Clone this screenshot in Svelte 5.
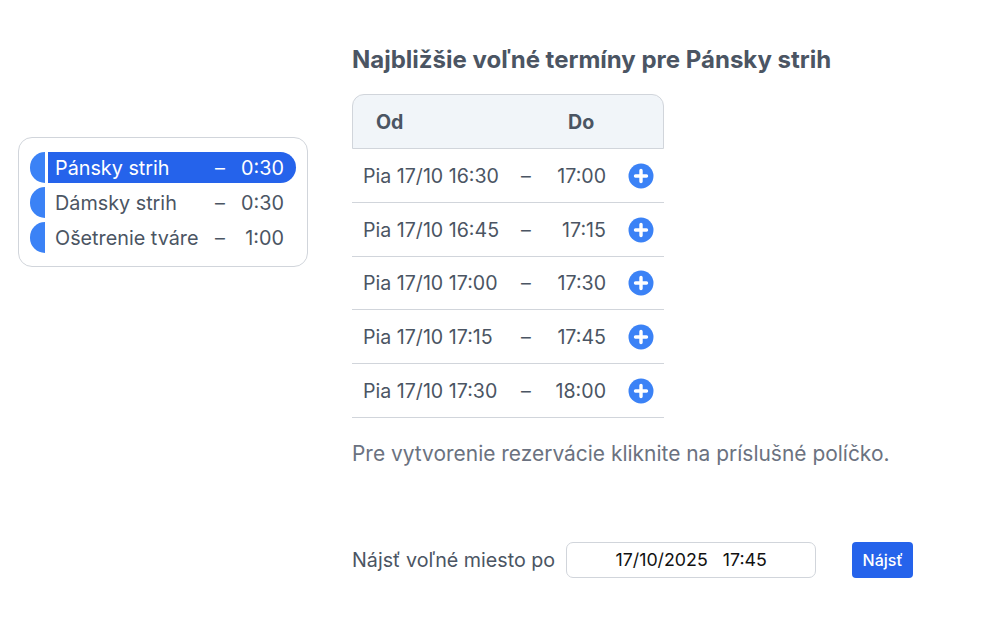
<script>
  const services = [
    { name: 'Pánsky strih', time: '0:30', active: true },
    { name: 'Dámsky strih', time: '0:30', active: false },
    { name: 'Ošetrenie tváre', time: '1:00', active: false }
  ];

  const slots = [
    { from: 'Pia 17/10 16:30', to: '17:00' },
    { from: 'Pia 17/10 16:45', to: '17:15' },
    { from: 'Pia 17/10 17:00', to: '17:30' },
    { from: 'Pia 17/10 17:15', to: '17:45' },
    { from: 'Pia 17/10 17:30', to: '18:00' }
  ];
</script>

<div class="page">
  <div class="services">
    {#each services as s}
      <div class="service">
        <span class="tab"></span>
        <div class="service-body" class:active={s.active}>
          <span class="service-name">{s.name}</span>
          <span class="dash">–</span>
          <span class="service-time">{s.time}</span>
        </div>
      </div>
    {/each}
  </div>

  <div class="main">
    <h2>Najbližšie voľné termíny pre Pánsky strih</h2>

    <div class="table">
      <div class="thead">
        <span class="th-from">Od</span>
        <span class="th-to">Do</span>
      </div>
      {#each slots as slot}
        <div class="row">
          <span class="from">{slot.from}</span>
          <span class="row-dash">–</span>
          <span class="to">{slot.to}</span>
          <svg class="plus" viewBox="0 0 26 26" aria-hidden="true">
            <circle cx="13" cy="13" r="12.5" fill="#3b82f6" />
            <path d="M13 7.5v11M7.5 13h11" stroke="#fff" stroke-width="3.4" stroke-linecap="round" />
          </svg>
        </div>
      {/each}
    </div>

    <p class="hint">Pre vytvorenie rezervácie kliknite na príslušné políčko.</p>

    <div class="search">
      <span class="search-label">Nájsť voľné miesto po</span>
      <div class="date-input">17/10/2025 &nbsp; 17:45</div>
      <button class="find">Nájsť</button>
    </div>
  </div>
</div>

<style>
  :global(body) {
    margin: 0;
    background: #fff;
    font-family: Inter, "Liberation Sans", sans-serif;
    color: #4b5563;
  }

  .page {
    display: flex;
    align-items: flex-start;
    width: 984px;
    height: 641px;
    box-sizing: border-box;
    padding: 0 0 0 18px;
    overflow: hidden;
  }

  .services {
    width: 290px;
    box-sizing: border-box;
    margin-top: 137px;
    padding: 14px 11px 13px 11px;
    border: 1px solid #d1d5db;
    border-radius: 14px;
    display: flex;
    flex-direction: column;
    gap: 4px;
    flex-shrink: 0;
  }

  .service {
    display: flex;
    height: 31px;
    gap: 3px;
  }

  .tab {
    width: 15px;
    height: 31px;
    background: #3b82f6;
    border-radius: 15px 0 0 15px;
    flex-shrink: 0;
  }

  .service-body {
    width: 250px;
    display: flex;
    align-items: center;
    padding: 0 12px 0 7px;
    box-sizing: border-box;
    font-size: 19.8px;
    border-radius: 0 16px 16px 0;
  }

  .service-body.active {
    background: #2563eb;
    color: #fff;
  }

  .service-name {
    white-space: nowrap;
  }

  .dash {
    margin-left: auto;
    margin-right: 13px;
  }

  .service-time {
    width: 46px;
    text-align: right;
  }

  .main {
    margin-left: 44px;
    padding-top: 44px;
    display: flex;
    flex-direction: column;
    align-items: flex-start;
  }

  h2 {
    margin: 0 0 19px;
    font-size: 24px;
    line-height: 31px;
    font-weight: 700;
    color: #4b5563;
    white-space: nowrap;
  }

  .table {
    width: 312px;
  }

  .thead {
    height: 55px;
    box-sizing: border-box;
    display: flex;
    align-items: center;
    background: #f1f5f9;
    border: 1px solid #d1d5db;
    border-radius: 12px 12px 0 0;
    font-size: 19.6px;
    font-weight: 700;
  }

  .th-from {
    margin-left: 23px;
    width: 192px;
  }

  .row {
    height: 53.75px;
    box-sizing: border-box;
    display: flex;
    align-items: center;
    border-bottom: 1px solid #d1d5db;
    font-size: 19.6px;
    padding: 1px 0 0 11px;
  }

  .from {
    width: 158px;
    white-space: nowrap;
  }

  .row-dash {
    width: 12px;
  }

  .to {
    width: 73px;
    text-align: right;
  }

  .plus {
    width: 26px;
    height: 26px;
    margin-left: 22px;
    flex-shrink: 0;
  }

  .hint {
    margin: 22px 0 0;
    font-size: 20.95px;
    line-height: 27px;
    color: #6b7280;
    white-space: nowrap;
  }

  .search {
    display: flex;
    align-items: center;
    margin-top: 75px;
  }

  .search-label {
    font-size: 19.7px;
    color: #4b5563;
    white-space: nowrap;
  }

  .date-input {
    width: 250px;
    height: 36px;
    margin-left: 11px;
    box-sizing: border-box;
    border: 1px solid #d1d5db;
    border-radius: 7px;
    display: flex;
    align-items: center;
    justify-content: center;
    font-size: 17.8px;
    color: #111;
  }

  .find {
    margin-left: 36px;
    width: 61px;
    height: 36px;
    border: none;
    border-radius: 4px;
    background: #2563eb;
    color: #fff;
    font-family: inherit;
    font-size: 16px;
    font-weight: 500;
    padding: 0;
  }
</style>
